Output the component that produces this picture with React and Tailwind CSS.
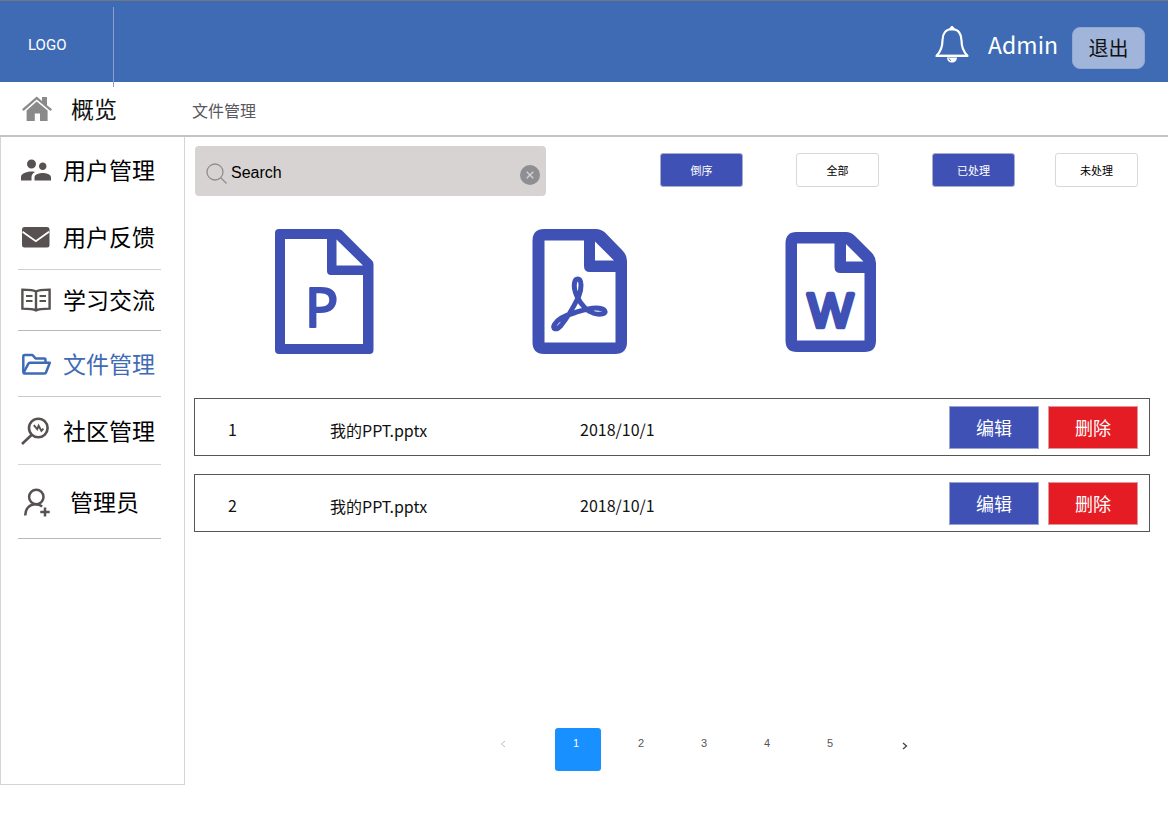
import React from "react";

function HomeIcon() {
  return (
    <svg className="h-[26px] w-[30px] shrink-0" viewBox="0 0 30 26" fill="#8a8a8a" aria-hidden="true">
      <path d="M0 13.2 14.7 .6 20 5V1h5v8.2l5 4-1.5 1.8L14.7 3.4 1.6 14.9z" />
      <path d="M14.7 5.4 25.6 14.6V25H18v-7.4h-5.2V25H4.6V14.6z" />
    </svg>
  );
}

function UsersIcon() {
  return (
    <svg className="h-[22px] w-[30px]" viewBox="2 5 20 14" fill="#575251" aria-hidden="true">
      <path d="M16.5 12c1.38 0 2.49-1.12 2.49-2.5S17.88 7 16.5 7C15.12 7 14 8.12 14 9.5s1.12 2.5 2.5 2.5zM9 11c1.66 0 2.99-1.34 2.99-3S10.66 5 9 5C7.34 5 6 6.34 6 8s1.34 3 3 3zm7.5 3c-1.83 0-5.5.92-5.5 2.75V19h11v-2.25c0-1.83-3.67-2.75-5.5-2.75zM9 13c-2.33 0-7 1.17-7 3.5V19h7v-2.25c0-.85.33-2.34 2.37-3.47C10.5 13.1 9.66 13 9 13z" />
    </svg>
  );
}

function MailIcon() {
  return (
    <svg className="h-[22px] w-[30px]" viewBox="0 0 30 22" aria-hidden="true">
      <rect x="1" y="1" width="27.5" height="20.5" rx="2.5" fill="#575251" />
      <path d="M1.5 5.8 14.8 15.2 28 5.8" fill="none" stroke="#fff" strokeWidth="1.8" />
    </svg>
  );
}

function BookIcon() {
  return (
    <svg className="h-[24px] w-[30px]" viewBox="0 0 30 24" fill="none" stroke="#575251" strokeWidth="2.4" aria-hidden="true">
      <path d="M15 3.4C12.5 1.6 9 1.6 1.400 1.600v19c7 0 10.800 0 13.600 1.800 2.800-1.800 6.600-1.800 13.600-1.800v-19C21 1.600 17.500 1.600 15 3.400z" />
      <path d="M15 3.400v19" />
      <path d="M5 8h6.500M5 13h6.500M18.500 8H25M18.500 13H25" strokeWidth="2" />
    </svg>
  );
}

function FolderIcon() {
  return (
    <svg className="h-[22px] w-[30px]" viewBox="0 0 30 22" fill="none" stroke="#3f6bb5" strokeWidth="2.500" strokeLinejoin="round" aria-hidden="true">
      <path d="M2.300 19.500V3.400Q2.300 2 3.700 2h7.800l3 3.400h8.800q1.200 0 1.200 1.200v3" />
      <path d="M8.800 9.800h20L25.200 19q-.5 1.400-1.700 1.400H3.400q-1 0-.7-.9L7.400 10.700q.4-.9 1.400-.9z" />
    </svg>
  );
}

function CommunityIcon() {
  return (
    <svg className="h-[28px] w-[30px]" viewBox="0 0 30 28" fill="none" stroke="#575251" strokeWidth="2.600" aria-hidden="true">
      <circle cx="17.300" cy="11" r="9.300" />
      <path d="M10.800 17.800 1 27" strokeWidth="2.600" />
      <path d="M12.800 8.200l3.400 4 1.400-3.400 2.800 5 2-2.200" strokeWidth="1.900" />
    </svg>
  );
}

function AdminIcon() {
  return (
    <svg className="h-[30px] w-[30px]" viewBox="0 0 30 30" fill="none" stroke="#575251" strokeWidth="2.500" aria-hidden="true">
      <circle cx="15.300" cy="10" r="7.200" />
      <path d="M4.200 28.500c0-6.500 4-11.200 10.200-11.200 2.700 0 5 .8 6.800 2.200" />
      <path d="M24 20.500v9M19.300 25h9.400" />
    </svg>
  );
}

function BellIcon() {
  return (
    <svg className="h-[38px] w-[34px]" viewBox="0 0 34 38" fill="none" stroke="#fff" strokeWidth="2.200" strokeLinejoin="round" aria-hidden="true">
      <path d="M17 3.200c-6.500 0-9.500 5-9.500 11 0 7-1.500 11-6 15.800h31c-4.500-4.800-6-8.800-6-15.800 0-6-3-11-9.500-11z" />
      <path d="M1 29.800h32" strokeWidth="2.400" />
      <path d="M15.200 3.200 17 .8l1.800 2.400z" fill="#fff" />
      <path d="M12 31.500c0 3 2.200 5 5 5s5-2 5-5z" fill="#fff" stroke="none" />
      <path d="M14 32.500q.8 1.700 2 2.200" stroke="#3f6bb5" strokeWidth="1" />
    </svg>
  );
}

function PptIcon() {
  return (
    <svg className="h-[125px] w-[99px]" viewBox="0 0 99 125" fill="none" stroke="#3f51b5" role="img" aria-label="PPT">
      <path
        d="M4 0H63q2.500 0 4 1.500L97 31.500Q98.500 33 98.500 35.500V121q0 4-4 4H4q-4 0-4-4V4Q0 0 4 0zM10 10V115H88V46H56q-4 0-4-4V10zM61.500 10.500V36.500H88z"
        fill="#3f51b5"
        fillRule="evenodd"
        stroke="none"
      />
      <text x="30" y="97.500" fontFamily="Noto Sans, sans-serif" fontSize="55" fill="#3f51b5" strokeWidth="2.200" strokeLinejoin="round">P</text>
    </svg>
  );
}

function PdfIcon() {
  return (
    <svg className="h-[125px] w-[95px]" viewBox="0 0 95 125" fill="none" stroke="#3f51b5" role="img" aria-label="PDF">
      <path
        d="M12 0H64q5 0 9 3.500L90.500 21.500Q95 26 95 32V113q0 12-12 12H12Q.5 125 .5 113V12Q.5 0 12 0zM12.500 11.500V113.500H83.500V43H58q-6 0-6-6V11.500zM63 12.500V31.500H82z"
        fill="#3f51b5"
        fillRule="evenodd"
        stroke="none"
      />
      <path
        d="M45.500 50C50 50 50 60 46.500 68 42 77 36 88 29 96.500 24 102 20 100 22.500 95.500 25 91 33 86.500 42 84 50 81.500 56 79 64 79 74 79 75 84 70.500 84.800 65 86 58 84 53 79 47 73 41 62 42.500 54 43 51 44 50 45.500 50z"
        strokeWidth="5"
        strokeLinejoin="round"
      />
    </svg>
  );
}

function WordIcon() {
  return (
    <svg className="h-[120px] w-[91px]" viewBox="0 0 91 120" fill="none" stroke="#3f51b5" role="img" aria-label="Word">
      <path
        d="M11.500 0H61q5 0 9 4L86.500 20.500Q91 25 91 31V108.500q0 11.500-11.500 11.500H12Q.5 120 .5 108.500V11.500Q.5 0 11.500 0zM12 11.500V108.500H79.500V41H55.500q-6 0-6-6V11.500zM61 12V29.500H78.500z"
        fill="#3f51b5"
        fillRule="evenodd"
        stroke="none"
      />
      <text x="45.500" y="95" textAnchor="middle" fontFamily="Liberation Sans, sans-serif" fontSize="48" fill="#3f51b5" strokeWidth="4.500" strokeLinejoin="round">W</text>
    </svg>
  );
}

const navItems = [
  { label: "用户管理", Icon: UsersIcon, row: "h-[67px] border-transparent", text: "pl-[12px]" },
  { label: "用户反馈", Icon: MailIcon, row: "h-[66px] border-[#d0d0d0]", text: "pl-[12px]" },
  { label: "学习交流", Icon: BookIcon, row: "h-[61px] border-[#b8b8b8]", text: "pl-[12px]" },
  { label: "文件管理", Icon: FolderIcon, row: "h-[66px] border-[#c8c8c8] text-[#3f6bb5]", text: "pl-[12px]", current: true },
  { label: "社区管理", Icon: CommunityIcon, row: "h-[68px] border-[#d4d4d4]", text: "pl-[12px]" },
  { label: "管理员", Icon: AdminIcon, row: "h-[74px] border-[#b8b8b8]", text: "pl-[19px]" },
];

const files = [
  { id: 1, name: "我的PPT.pptx", date: "2018/10/1" },
  { id: 2, name: "我的PPT.pptx", date: "2018/10/1" },
];

const filled = "h-[34px] w-[83px] rounded-[3px] border border-[#a9aecb] bg-[#3f51b5] text-[11px] text-white";
const outlined = "h-[34px] w-[83px] rounded-[3px] border border-[#d8d8d8] bg-white text-[11px] text-black";

function Header() {
  return (
    <header className="flex h-[82px] items-start justify-between border-t border-[#6f7680] bg-[#3f6bb5] pr-[23px]">
      <a href="#home" className="mt-[6px] flex h-[80px] w-[114px] items-center border-r border-[#8a9fcb] pb-[4px] pl-[28px] font-['Roboto',sans-serif] text-[15px] text-white">
        LOGO
      </a>
      <div className="flex h-full items-center pt-[12px]">
        <button type="button" aria-label="通知" className="mb-[6px]">
          <BellIcon />
        </button>
        <span className="mb-[8px] ml-[19px] text-[23px] leading-[32px] text-white">Admin</span>
        <button type="button" className="ml-[14px] h-[42px] w-[73px] rounded-lg border border-[#8fa8d6] bg-[#a1b5db] text-[20px] text-[#111]">
          退出
        </button>
      </div>
    </header>
  );
}

function Sidebar() {
  return (
    <nav aria-label="主菜单" className="h-[648px] w-[185px] shrink-0 border border-t-0 border-[#d4d4d4]">
      <ul className="pr-[23px] pl-[17px]">
        {navItems.map(({ label, Icon, row, text, current }) => (
          <li key={label} className={`border-b ${row}`}>
            <a href="#section" aria-current={current ? "page" : undefined} className="flex h-full items-center pl-[3px]">
              <Icon />
              <span className={`pb-[2px] text-[23px] leading-[32px] whitespace-nowrap ${text}`}>{label}</span>
            </a>
          </li>
        ))}
      </ul>
    </nav>
  );
}

function Toolbar() {
  return (
    <div className="flex flex-wrap items-start justify-between gap-y-2 pr-[12px] pl-[1px]">
      <div className="flex h-[50px] w-[351px] items-center rounded-[4px] bg-[#d7d3d2] pr-[6px] pl-[11px]">
        <svg className="mt-[5px] h-[22px] w-[22px] shrink-0" viewBox="0 0 22 22" fill="none" stroke="#8e8e93" strokeWidth="1.300" aria-hidden="true">
          <circle cx="9" cy="9" r="8" />
          <path d="M14.500 14.500 20.500 20.500" />
        </svg>
        <input
          type="text"
          aria-label="搜索"
          placeholder="Search"
          className="mt-[4px] ml-[3px] min-w-0 flex-1 bg-transparent font-['Liberation_Sans',sans-serif] text-[16px] text-black outline-none placeholder:text-black"
        />
        <button type="button" aria-label="清除" className="mt-[8px]">
          <svg className="h-[20px] w-[20px]" viewBox="0 0 20 20" aria-hidden="true">
            <circle cx="10" cy="10" r="10" fill="#8e8e93" />
            <path d="M6.700 6.700l6.600 6.600M13.300 6.700l-6.600 6.600" stroke="#d7d3d2" strokeWidth="1.300" />
          </svg>
        </button>
      </div>
      <div className="flex items-center gap-[40px] pt-[7px]">
        <div className="flex items-center gap-[53px]">
          <button type="button" className={filled}>倒序</button>
          <button type="button" className={outlined}>全部</button>
          <button type="button" className={filled}>已处理</button>
        </div>
        <button type="button" className={outlined}>未处理</button>
      </div>
    </div>
  );
}

function FileTable() {
  return (
    <table className="w-full table-fixed border-separate border-spacing-x-0 border-spacing-y-[18px] text-[16px] text-[#111]">
      <colgroup>
        <col className="w-[136px]" />
        <col className="w-[250px]" />
        <col />
        <col className="w-[201px]" />
      </colgroup>
      <tbody>
        {files.map((file) => (
          <tr key={file.id} className="h-[58px]">
            <td className="border-y border-l border-[#555] pt-[4px] pl-[33px]">{file.id}</td>
            <td className="border-y border-[#555] pt-[6px]">{file.name}</td>
            <td className="border-y border-[#555] pt-[4px]">{file.date}</td>
            <td className="border-y border-r border-[#555] p-0">
              <div className="flex gap-[9px]">
                <button type="button" className="h-[43px] w-[90px] border border-[#9ba3cf] bg-[#3f51b5] text-[18px] text-white">编辑</button>
                <button type="button" className="h-[43px] w-[90px] border border-[#dc9a9d] bg-[#e51c23] text-[18px] text-white">删除</button>
              </div>
            </td>
          </tr>
        ))}
      </tbody>
    </table>
  );
}

function Pagination() {
  return (
    <nav aria-label="分页" className="flex justify-center gap-[29px] pl-[64px] font-['Liberation_Sans',sans-serif] text-[11px] text-[#555]">
      <button type="button" aria-label="上一页" disabled className="flex h-[43px] w-[46px] items-center justify-center pb-[12px]">
        <svg className="h-[8px] w-[6px]" viewBox="0 0 6 8" fill="none" stroke="#bbb" aria-hidden="true">
          <path d="M5 1 1.500 4 5 7" />
        </svg>
      </button>
      <div className="flex gap-[17px]">
        <button type="button" aria-current="page" className="h-[43px] w-[46px] rounded-[3px] bg-[#1890ff] pr-[4px] pb-[12px] text-white">1</button>
        {[2, 3, 4, 5].map((page) => (
          <button type="button" key={page} className="h-[43px] w-[46px] pb-[12px]">{page}</button>
        ))}
      </div>
      <button type="button" aria-label="下一页" className="flex h-[43px] w-[46px] items-center justify-center pb-[8px]">
        <svg className="h-[8px] w-[6px]" viewBox="0 0 6 8" fill="none" stroke="#444" strokeWidth="1.300" aria-hidden="true">
          <path d="M1 1 4.500 4 1 7" />
        </svg>
      </button>
    </nav>
  );
}

export default function App() {
  return (
    <div className="min-h-screen bg-white font-['Noto_Sans_CJK_SC',sans-serif] text-black">
      <Header />
      <div className="flex h-[55px] items-center border-b-2 border-[#c4c4c4]">
        <a href="#overview" className="flex w-[192px] items-center gap-[19px] pl-[22px] text-[23px] leading-[32px] text-[#111]">
          <HomeIcon />
          <span className="pb-[2px]">概览</span>
        </a>
        <h1 className="pt-[2px] text-[16px] text-[#5b5760]">文件管理</h1>
      </div>
      <div className="flex">
        <Sidebar />
        <main className="min-w-0 flex-1 pt-[9px] pr-[18px] pl-[9px]">
          <Toolbar />
          <div className="flex items-center gap-[158px] pt-[33px] pl-[81px]">
            <PptIcon />
            <PdfIcon />
            <WordIcon />
          </div>
          <div className="pt-[26px]">
            <FileTable />
          </div>
          <div className="pt-[178px]">
            <Pagination />
          </div>
        </main>
      </div>
    </div>
  );
}
